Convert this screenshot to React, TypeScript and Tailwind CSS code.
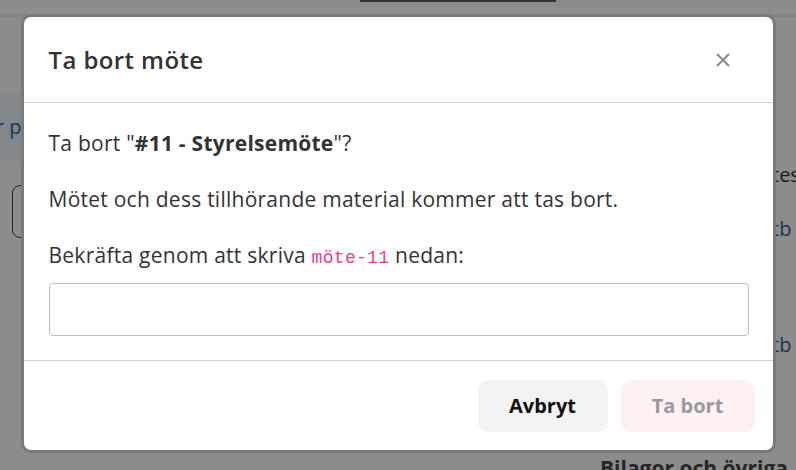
export default function App() {
  return (
    <div className="relative w-[796px] h-[470px] overflow-hidden bg-[#8c8c8c] font-['Open_Sans',sans-serif]">
      {/* dimmed page behind the dialog */}
      <div className="absolute left-[360px] top-0 w-[196px] h-[2px] bg-[#333]" />
      <div className="absolute left-0 top-[14px] w-full h-[3px] bg-[#828282]" />
      <div className="absolute left-0 top-[93px] w-[30px] h-[68px] bg-[#81878b] flex items-center">
        <span className="text-[20px] text-[#1f3550] -ml-[4px]">r p</span>
      </div>
      <div className="absolute left-[12px] top-[185px] w-[30px] h-[53px] rounded-[8px] border border-[#222]" />
      <div className="absolute left-[772px] top-[150px] w-[24px] flex flex-col">
        <div className="h-[50px] border-b border-[#868686] flex items-center text-[20px] text-[#1c1c1c]">tes</div>
        <div className="h-[58px] border-b border-[#868686] flex items-center text-[20px] text-[#1f3550]">tb</div>
        <div className="h-[58px] border-b border-[#868686]" />
        <div className="h-[58px] border-b border-[#868686] flex items-center text-[20px] text-[#1f3550]">tb</div>
      </div>
      <div className="absolute left-[600px] top-[453px] text-[21px] font-bold text-[#262626] whitespace-nowrap">Bilagor och övriga</div>

      {/* dialog */}
      <div className="absolute inset-0 flex justify-center pt-[14px]">
        <div className="w-[755px] h-[439px] rounded-[10px] border-[3px] border-[#6b6b6b]/90 bg-white flex flex-col overflow-hidden">
          <div className="h-[86px] flex items-center justify-between pl-[25px] pr-[43px] border-b border-[#cfcfcf]">
            <h2 className="text-[24px] font-semibold tracking-[0.4px] text-[#333]">Ta bort möte</h2>
            <svg width="14" height="14" viewBox="0 0 14 14" className="text-[#8a8a8a]">
              <path d="M1.5 1.5 L12.5 12.5 M12.5 1.5 L1.5 12.5" stroke="currentColor" strokeWidth="2" strokeLinecap="round" />
            </svg>
          </div>
          <div className="flex-1 flex flex-col pl-[25px] pr-[24px] pt-[26px] text-[21px] tracking-[0.25px] leading-[28px] text-[#333]">
            <p>Ta bort "<b className="font-bold">#11 - Styrelsemöte</b>"?</p>
            <p className="mt-[28px]">Mötet och dess tillhörande material kommer att tas bort.</p>
            <p className="mt-[28px]">
              Bekräfta genom att skriva{' '}
              <code className="font-['Liberation_Mono',monospace] text-[18px] tracking-[0.3px] text-[#e83e8c]">möte-11</code> nedan:
            </p>
            <input className="mt-[11px] h-[53px] w-full rounded-[4px] border border-[#bdbdbd] outline-none" />
          </div>
          <div className="h-[90px] border-t border-[#cfcfcf] flex items-center justify-end gap-[13px] pr-[18px]">
            <button className="h-[52px] w-[130px] rounded-[10px] bg-[#f3f3f3] text-[20px] font-bold text-[#111]">Avbryt</button>
            <button className="h-[52px] w-[134px] rounded-[10px] bg-[#fdf1f1] text-[20px] font-bold text-[#9a9a9a]">Ta bort</button>
          </div>
        </div>
      </div>
    </div>
  );
}
